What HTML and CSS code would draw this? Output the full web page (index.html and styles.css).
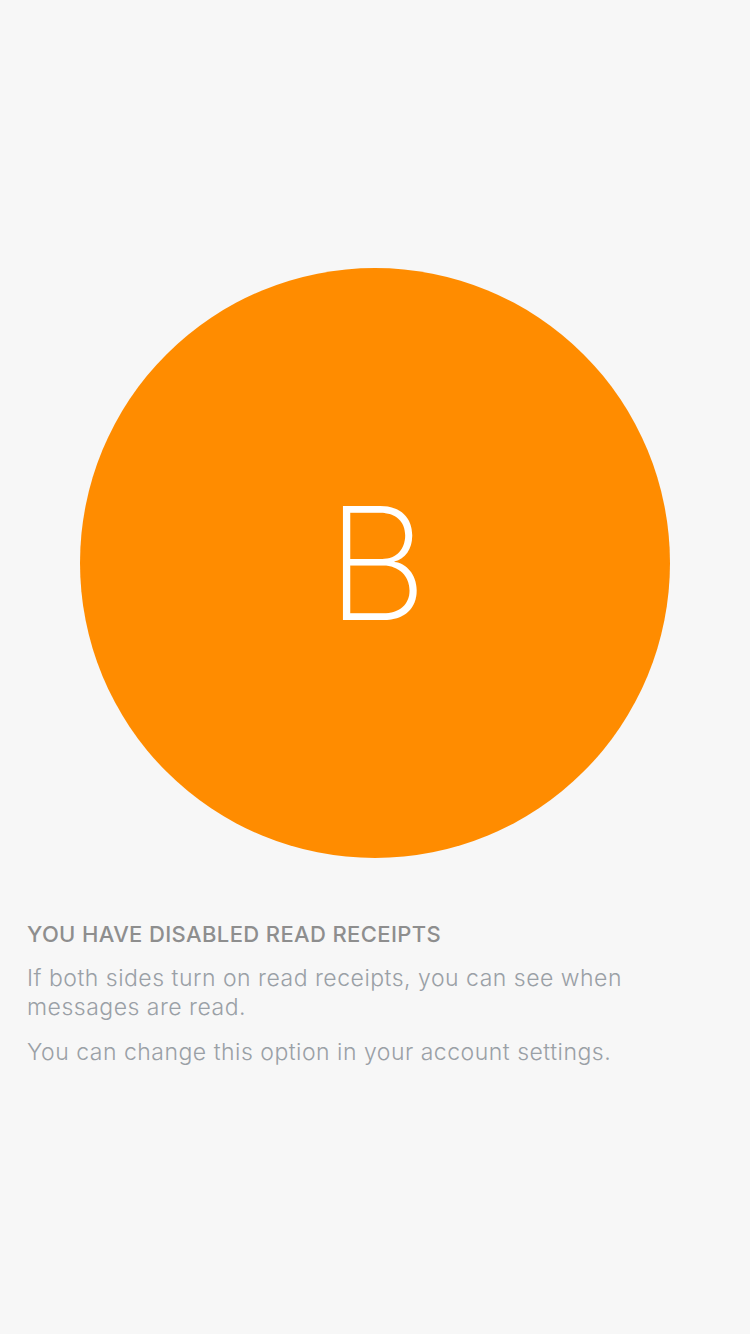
FILE: index.html
```html
<!DOCTYPE html>
<html>
<head>
<meta charset="utf-8">
<link rel="stylesheet" href="styles.css">
</head>
<body>
<main class="page">
  <div class="avatar-wrap">
    <div class="avatar"><span class="initial">B</span></div>
  </div>
  <section class="info">
    <h2 class="title">YOU HAVE DISABLED READ RECEIPTS</h2>
    <p class="text">If both sides turn on read receipts, you can see when messages are read.</p>
    <p class="text">You can change this option in your account settings.</p>
  </section>
</main>
</body>
</html>
```
FILE: styles.css
```css
html, body {
  margin: 0;
  padding: 0;
  background: #f7f7f7;
}
body {
  width: 750px;
  height: 1334px;
  font-family: Inter, "Noto Sans", sans-serif;
}
.page {
  display: flex;
  flex-direction: column;
}
.avatar-wrap {
  display: flex;
  justify-content: center;
  padding-top: 268px;
}
.avatar {
  width: 590px;
  height: 590px;
  border-radius: 50%;
  background: #ff8c00;
  display: flex;
  align-items: center;
  justify-content: center;
}
.initial {
  color: #ffffff;
  font-family: Inter, sans-serif;
  font-weight: 200;
  font-size: 157px;
  line-height: 1;
  padding-left: 4px;
}
.info {
  padding: 62px 27px 0 27px;
}
.title {
  margin: 0;
  font-size: 22px;
  font-weight: 500;
  letter-spacing: 0.37px;
  color: #8e8e8e;
  line-height: 28px;
}
.text {
  margin: 16px 0 0 0;
  font-size: 23px;
  font-weight: 300;
  letter-spacing: 0.5px;
  color: #9aa0a6;
  line-height: 29px;
}
.text + .text {
  margin-top: 16px;
}
```
